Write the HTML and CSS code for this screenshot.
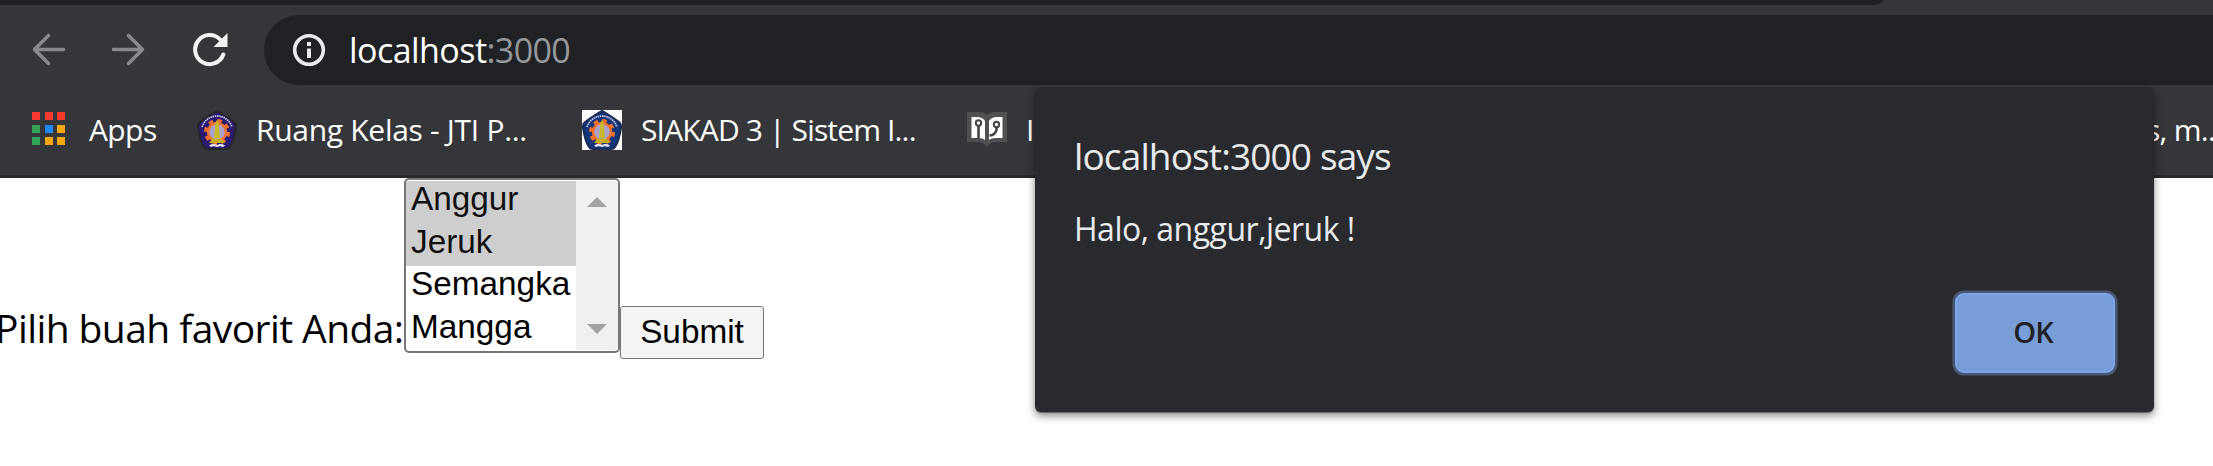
FILE: index.html
```html
<!DOCTYPE html>
<html lang="id">
<head>
<meta charset="utf-8">
<title>localhost:3000</title>
<link rel="stylesheet" href="styles.css">
</head>
<body>
<div class="browser">
  <div class="tabstrip"><div class="tabstrip-fill"></div></div>
  <div class="toolbar">
    <svg class="nav-icon back" viewBox="0 0 36 36"><path d="M33.500 17.500H4.500M18.500 3.500L4.500 17.500 18.500 31.500"/></svg>
    <svg class="nav-icon forward" viewBox="0 0 36 36"><path d="M2.500 17.500H31.500M17.500 3.500L31.500 17.500 17.500 31.500"/></svg>
    <svg class="nav-icon reload" viewBox="0 0 36 36"><path class="arc" d="M31.300 22.500A14.500 14.500 0 1 1 28.500 8"/><path class="head" d="M35.500 1V15H21.500Z"/></svg>
    <div class="omnibox">
      <svg class="info" viewBox="0 0 34 34"><circle cx="17" cy="17" r="14.300"/><path d="M15 15.500h4v9.500h-4zM15 9h4v4h-4z"/></svg>
      <span class="url"><span class="host">localhost</span><span class="port">:3000</span></span>
    </div>
  </div>
  <div class="bookmarks">
    <div class="apps-grid"><i class="r"></i><i class="r"></i><i class="r"></i><i class="g"></i><i class="b"></i><i class="y"></i><i class="g"></i><i class="y"></i><i class="y"></i></div>
    <span class="bm bm-apps">Apps</span>
    <svg class="logo logo-one" viewBox="0 0 40 40"><use href="#crest"/></svg>
    <span class="bm bm-ruang">Ruang Kelas - JTI P...</span>
    <svg class="logo logo-two" viewBox="0 0 40 40"><rect width="40" height="40" fill="#fff"/>
      <g id="crest"><path class="shield" d="M20 1Q24 3 37 12Q39.500 14 39 18Q37 31 33 37Q32 39 29 39H11Q8 39 7 37Q3 31 1 18Q.5 14 3 12Q16 3 20 1Z"/>
      <path d="M5 17Q9 6.500 20 6Q31 6.500 35 17" fill="none" stroke="#c3c6e2" stroke-width="1.800" stroke-dasharray="1.500 .7"/>
      <circle cx="20" cy="22" r="11" fill="none" stroke="#f3702b" stroke-width="4" stroke-dasharray="4.320 4.320"/>
      <circle cx="20" cy="22" r="9" fill="#aaa2cc" stroke="#f3702b" stroke-width="2.500"/>
      <path d="M18.500 13L20 9.500 21.500 13 23 28H17Z" fill="#c9b82a"/><path d="M12 33L15.500 28.500H24.500L28 33Z" fill="#c8ae22"/>
      <path d="M12 35.500Q16 33 20 35Q24 33 28 35.500L26 37Q23 35.500 20 37Q17 35.500 14 37Z" fill="#e7e7ee"/></g>
    </svg>
    <span class="bm bm-siakad">SIAKAD 3 | Sistem I...</span>
    <svg class="logo book" viewBox="0 0 40 40"><path fill="#505052" d="M0 2H12Q18 2 20 5Q22 2 28 2H40V32H27Q22 33 20 37Q18 33 13 32H0Z"/><path fill="#fff" d="M4.500 7H11Q16 7.500 18 11V30Q16 28 11 28H4.500ZM22 11Q24 7.500 29 7H35.500V28H29Q24 28 22 30Z"/><path fill="none" stroke="#444" stroke-width="2.600" d="M11.500 16V29M29.500 17V20Q29 22 27.500 23.500Q26 25.500 22.500 25.500"/><circle cx="11.500" cy="13" r="2.700" fill="#fff" stroke="#444" stroke-width="2"/><circle cx="29.500" cy="14.500" r="2.700" fill="#fff" stroke="#444" stroke-width="2"/></svg>
    <span class="bm bm-cut">I</span>
    <span class="bm bm-last">s, m...</span>
  </div>
  <div class="page">
    <label class="question">Pilih buah favorit Anda:</label>
    <div class="listbox">
      <div class="options"><div class="option on">Anggur</div><div class="option on">Jeruk</div><div class="option">Semangka</div><div class="option">Mangga</div></div>
      <div class="scroll"><i class="up"></i><i class="down"></i></div>
    </div>
    <button class="submit">Submit</button>
  </div>
  <div class="dialog">
    <div class="dialog-title"><span>localhost:3000 says</span></div>
    <div class="dialog-text"><span>Halo, anggur,jeruk !</span></div>
    <button class="ok">OK</button>
  </div>
</div>
</body>
</html>
```
FILE: styles.css
```css
* { box-sizing: border-box; }
body { margin: 0; background: #fff; font-family: "Open Sans", "Noto Sans", sans-serif; }
.browser { position: relative; width: 2213px; height: 466px; overflow: hidden; }
.tabstrip { height: 5px; background: #35363a; }
.tabstrip-fill { width: 1883px; height: 5px; background: #202124; border-bottom-right-radius: 9px 5px; }
.toolbar { height: 80px; padding-top: 10px; background: #35363a; display: flex; }
.nav-icon { flex: none; width: 36px; height: 36px; margin-top: 17px; fill: none; stroke: #88898c; stroke-width: 3.6; stroke-linecap: round; stroke-linejoin: round; }
.back { margin-left: 30px; }
.forward { margin-left: 45px; }
.reload { margin-left: 45px; }
.reload .arc { stroke: #f1f3f4; stroke-width: 4; }
.reload .head { fill: #f1f3f4; stroke: none; }
.omnibox { flex: 1; height: 70px; margin-left: 36px; padding-left: 28px; border-radius: 35px 0 0 35px; background: #202124; display: flex; align-items: center; }
.info { width: 34px; height: 34px; fill: #e8eaed; }
.info circle { fill: none; stroke: #e8eaed; stroke-width: 3.6; }
.url { margin-left: 23px; font-size: 34px; line-height: 70px; white-space: nowrap; }
.host { color: #fff; letter-spacing: -.55px; }
.port { color: #96989b; letter-spacing: -.6px; }
.bookmarks { height: 93px; background: #35363a; border-bottom: 3px solid #29292b; display: flex; padding-top: 25px; }
.bm { color: #fff; font-size: 30px; line-height: 39px; white-space: nowrap; flex: none; }
.apps-grid { flex: none; margin: 2px 0 0 32px; width: 33px; height: 34px; display: grid; grid-template-columns: repeat(3, 8px); gap: 4.500px; grid-auto-rows: 8px; }
.r { background: #f8392f; }
.g { background: #34a35a; }
.b { background: #2089f5; }
.y { background: #f4a60b; }
.bm-apps { margin-left: 24px; width: 84px; letter-spacing: -.6px; }
.logo { flex: none; width: 40px; height: 40px; }
.logo-one { margin-left: 24px; --shield: #2a1a70; --rim: #26262a; }
.logo-two { --shield: #12357c; --rim: #1c2c58; }
.shield { fill: var(--shield); stroke: var(--rim); stroke-width: 2; }
.bm-ruang { margin-left: 19px; width: 326px; letter-spacing: -.3px; }
.bm-siakad { margin-left: 19px; width: 326px; letter-spacing: -.85px; }
.bm-cut { margin-left: 19px; width: 1120px; }
.bm-last { letter-spacing: -.7px; }
.page { display: flex; height: 288px; align-items: flex-start; }
.question { margin: 120px 0 0 -5px; width: 409px; font-size: 39px; line-height: 60px; white-space: nowrap; letter-spacing: -.58px; color: #000; }
.listbox { width: 216px; height: 175px; padding: 1px 0; border: 2px solid #767676; border-radius: 5px; display: flex; background: #fff; }
.options { width: 170px; }
.option { height: 42.500px; padding-left: 5px; font: 33.333px/36px "Liberation Sans", Arial, sans-serif; color: #000; }
.on { background: #cecece; color: #101010; }
.scroll { width: 42px; background: #f0f0f0; display: flex; flex-direction: column; align-items: center; justify-content: space-between; padding: 16px 0; }
.up, .down { width: 0; height: 0; border: 10px solid transparent; }
.up { border-top: 0; border-bottom-color: #a3a3a3; }
.down { border-bottom: 0; border-top-color: #a3a3a3; }
.submit { width: 144px; height: 53px; margin: 128px 0 0; padding: 0 0 2px; border: 1px solid #767676; border-radius: 3px; background: #f4f4f4; color: #000; font: 33.333px/48px "Liberation Sans", Arial, sans-serif; }
.dialog { position: absolute; left: 1035px; top: 87px; width: 1119px; height: 325px; padding: 39px 39px 0; border-radius: 6px; background: #292a2d; color: #e8eaed; box-shadow: 0 1px 1px 0 rgba(0,0,0,.4), 0 4px 9px rgba(0,0,0,.45); display: flex; flex-direction: column; }
.dialog-title { height: 60px; font-size: 37px; line-height: 60px; letter-spacing: -.87px; }
.dialog-text { height: 60px; margin-top: 13px; font-size: 32px; line-height: 60px; letter-spacing: -.5px; }
.ok { align-self: flex-end; width: 160px; height: 80px; margin-top: 34px; padding: 0 4px 2px 0; border: 2px solid #7da5e8; border-radius: 9px; box-shadow: 0 0 0 2.500px #4a5873; background: #799dd7; color: #202124; font: 600 29px/74px "Open Sans", "Noto Sans", sans-serif; letter-spacing: -1px; }
```
